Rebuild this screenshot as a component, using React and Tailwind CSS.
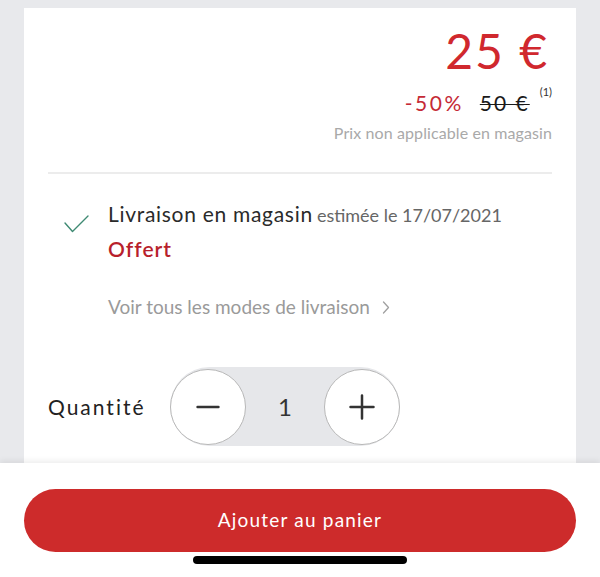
import React from "react";

export default function App() {
  const font = { fontFamily: "'Lato', 'Open Sans', sans-serif" };
  return (
    <div className="w-[600px] h-[577px] flex flex-col bg-[#e8e9ec] overflow-hidden" style={font}>
      <div className="h-[463px] px-6 pt-2 overflow-hidden">
        <div className="bg-white h-full px-6 pt-[19px]">
          <div className="flex flex-col items-end">
            <div className="text-[48px] leading-[48px] tracking-[2px] text-[#d0282e] mr-[3px]">25 €</div>
            <div className="flex items-start mt-[16px]">
              <span className="text-[21px] leading-[24px] tracking-[2.5px] text-[#c52a36]">-50%</span>
              <span className="text-[21px] leading-[24px] tracking-[2px] text-[#1a1a1a] line-through decoration-1 ml-[16px]">50 €</span>
              <span className="text-[11px] leading-[12px] text-[#333] ml-[10px] -mt-[5px]">(1)</span>
            </div>
            <div className="text-[16px] leading-[20px] tracking-[0.1px] text-[#a9a9a9] mt-[8px]">Prix non applicable en magasin</div>
          </div>
          <div className="h-[2px] bg-[#ececec] mt-[29px]" />
          <div className="flex mt-[27px]">
            <div className="w-[60px] pt-[14px] pl-[16px]">
              <svg width="25" height="18" viewBox="0 0 25 18" fill="none">
                <path d="M1 8 L8.5 16.5 L24 1" stroke="#3f8a73" strokeWidth="1.4" strokeLinecap="round" strokeLinejoin="round" />
              </svg>
            </div>
            <div className="flex flex-col">
              <div className="leading-[26px] whitespace-nowrap">
                <span className="text-[21px] tracking-[0.7px] text-[#2a2a2a]">Livraison en magasin</span>{" "}
                <span className="text-[18px] text-[#666]">estimée le 17/07/2021</span>
              </div>
              <div className="text-[21px] leading-[26px] tracking-[1px] font-semibold text-[#b81f2c] mt-[7px]">Offert</div>
              <div className="text-[19px] leading-[24px] text-[#9a9a9a] mt-[33px] flex items-center">
                Voir tous les modes de livraison
                <svg className="ml-[12px]" width="8" height="13" viewBox="0 0 8 13" fill="none">
                  <path d="M1.5 1 L6.5 6.5 L1.5 12" stroke="#a0a0a0" strokeWidth="1.3" strokeLinecap="round" strokeLinejoin="round" />
                </svg>
              </div>
            </div>
          </div>
          <div className="flex items-center mt-[48px]">
            <span className="text-[21px] leading-[26px] text-[#222] tracking-[2px] w-[122px]">Quantité</span>
            <div className="flex items-center bg-[#e6e7ea] rounded-full w-[230px] h-[79px]">
              <div className="w-[76px] h-[76px] rounded-full bg-white border border-[#b8b8b8] flex items-center justify-center">
                <svg width="24" height="4" viewBox="0 0 24 4"><path d="M1.5 2 H22.5" stroke="#333" strokeWidth="2.4" strokeLinecap="round" /></svg>
              </div>
              <div className="flex-1 text-center text-[24px] text-[#333]">1</div>
              <div className="w-[76px] h-[76px] rounded-full bg-white border border-[#b8b8b8] flex items-center justify-center">
                <svg width="26" height="26" viewBox="0 0 26 26"><path d="M13 1.5 V24.5 M1.5 13 H24.5" stroke="#333" strokeWidth="2.5" strokeLinecap="round" /></svg>
              </div>
            </div>
          </div>
        </div>
      </div>
      <div className="flex-1 bg-white shadow-[0_-2px_6px_rgba(0,0,0,0.08)] relative flex flex-col items-center pt-[26px]">
        <button className="w-[552px] h-[63px] rounded-full bg-[#cd2b2b] text-white text-[19px] tracking-[1.2px]">Ajouter au panier</button>
        <div className="w-[214px] h-[8px] rounded-full bg-black mt-[4px]" />
      </div>
    </div>
  );
}
